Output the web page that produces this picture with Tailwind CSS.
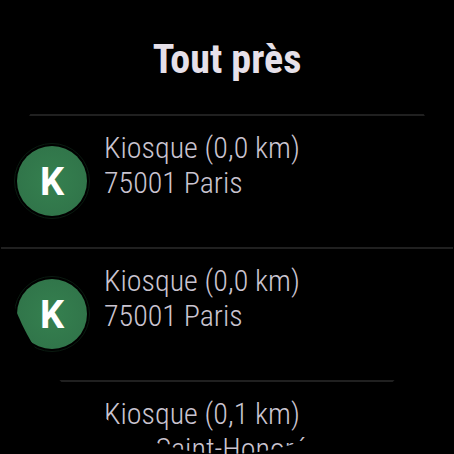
<!DOCTYPE html>
<html lang="fr">
<head>
<meta charset="utf-8">
<meta name="viewport" content="width=device-width, initial-scale=1">
<title>Tout près</title>
<script src="https://cdn.jsdelivr.net/npm/@tailwindcss/browser@4"></script>
</head>
<body class="bg-black">
<!-- Round watch face: everything outside the circle is cut off -->
<main class="h-screen w-full overflow-hidden rounded-full bg-black font-['Roboto_Condensed','Roboto',sans-serif] text-[#cac4d0]">
  <h1 class="pt-[37px] pb-[31px] text-center text-[40px] leading-[46px] font-bold text-[#e6e0e9]">Tout près</h1>
  <ul>
    <li class="flex h-[133px] items-start gap-3.5 border-t-2 border-[#202020] pt-3.5 pl-[14px]">
      <span class="mt-[13px] flex size-[76px] shrink-0 items-center justify-center rounded-full border border-[#0a1a10]">
        <span class="flex size-[70px] items-center justify-center rounded-full bg-[radial-gradient(circle,#35804f,#2f7148)] pt-0.5 font-['Roboto',sans-serif] text-[38px] leading-none font-bold text-white">K</span>
      </span>
      <p class="text-[30px] leading-[35px] font-light whitespace-nowrap">Kiosque (0,0 km)<br>75001 Paris</p>
    </li>
    <li class="flex h-[133px] items-start gap-3.5 border-t-2 border-[#202020] pt-3.5 pl-[14px]">
      <span class="mt-[13px] flex size-[76px] shrink-0 items-center justify-center rounded-full border border-[#0a1a10]">
        <span class="flex size-[70px] items-center justify-center rounded-full bg-[radial-gradient(circle,#35804f,#2f7148)] pt-0.5 font-['Roboto',sans-serif] text-[38px] leading-none font-bold text-white">K</span>
      </span>
      <p class="text-[30px] leading-[35px] font-light whitespace-nowrap">Kiosque (0,0 km)<br>75001 Paris</p>
    </li>
    <li class="flex h-[133px] items-start gap-3.5 border-t-2 border-[#202020] pt-3.5 pl-[14px]">
      <span class="mt-[13px] flex size-[76px] shrink-0 items-center justify-center rounded-full border border-[#0a1a10]">
        <span class="flex size-[70px] items-center justify-center rounded-full bg-[radial-gradient(circle,#35804f,#2f7148)] pt-0.5 font-['Roboto',sans-serif] text-[38px] leading-none font-bold text-white">K</span>
      </span>
      <p class="text-[30px] leading-[35px] font-light whitespace-nowrap">Kiosque (0,1 km)<br>Rue Saint-Honoré</p>
    </li>
  </ul>
</main>
</body>
</html>
